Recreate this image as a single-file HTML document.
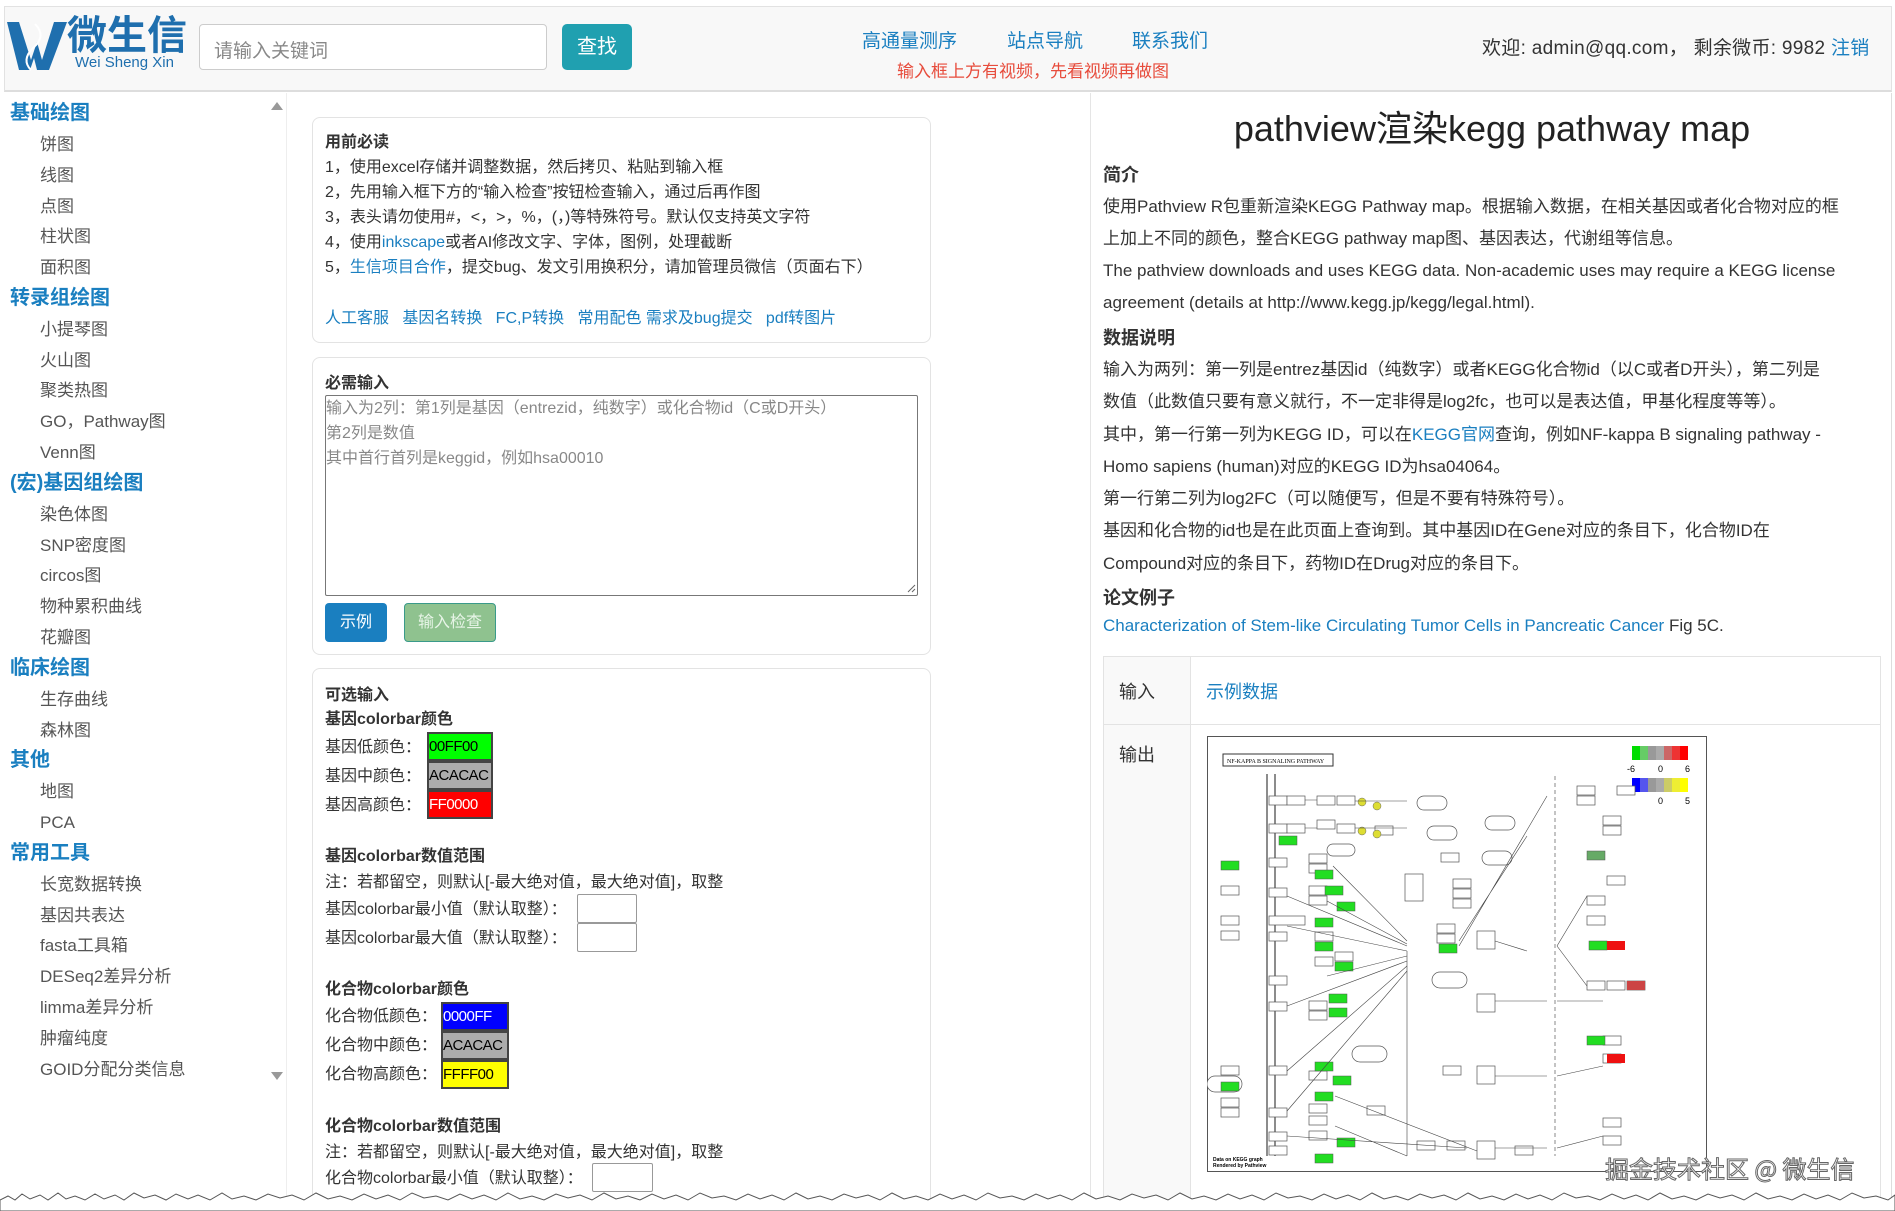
<!DOCTYPE html>
<html><head><meta charset="utf-8">
<style>
*{margin:0;padding:0;box-sizing:border-box}
html,body{width:1895px;height:1211px;overflow:hidden}
body{background:#fff;position:relative;font-family:"Liberation Sans","Noto Sans CJK SC",sans-serif;color:#333}
.a{position:absolute;white-space:nowrap}
.hdr{position:absolute;left:4px;top:6px;width:1888px;height:86px;background:#f8f8f8;border:1px solid #e2e2e2;border-bottom:2px solid #ddd}
.side .h{position:absolute;left:10px;font-size:20px;font-weight:bold;color:#1a7fc0;line-height:31px}
.side .i{position:absolute;left:40px;font-size:17px;color:#555;line-height:31px}
.card{position:absolute;left:312px;width:619px;border:1px solid #e3e3e3;border-radius:8px;background:#fff}
.m{font-size:16px;line-height:25px;color:#333}
.b{font-weight:bold}
.blue{color:#1a7fc0}
.cb{position:absolute;height:29px;border:2px solid #444;font-size:15px;line-height:25px;padding-left:0;overflow:hidden;letter-spacing:-0.5px}
.inp{position:absolute;height:29px;border:1px solid #999;border-radius:2px;background:#fff}
.r{font-size:17px;color:#333}
</style></head><body>
<div class="hdr"></div>
<svg class="a" style="left:5px;top:16px" width="64" height="56" viewBox="0 0 64 56">
<path d="M2 6 L14 6 L26 44 L32 26 L37 44 L49 6 L62 6 L44 54 L32 54 L29 42 L25 54 L14 54 Z" fill="#1f6fae"/>
<path d="M30 8 Q42 20 28 32 Q16 44 26 54" stroke="#fff" stroke-width="2" fill="none"/>
</svg>
<div class="a" style="left:67px;top:8px;font-size:40px;font-weight:bold;color:#1f6fae;line-height:48px;font-family:'Noto Sans CJK SC',sans-serif">微生信</div>
<div class="a" style="left:75px;top:54px;font-size:15px;color:#1f6fae">Wei Sheng Xin</div>
<div class="a" style="left:199px;top:24px;width:348px;height:46px;border:1px solid #ccc;border-radius:4px;background:#fff;font-size:19px;color:#888;padding:11px 14px">请输入关键词</div>
<div class="a" style="left:562px;top:24px;width:70px;height:46px;background:#20a0b0;border-radius:5px;color:#fff;font-size:20px;text-align:center;line-height:46px">查找</div>
<div class="a blue" style="left:862px;top:26px;font-size:19px">高通量测序</div>
<div class="a blue" style="left:1007px;top:26px;font-size:19px">站点导航</div>
<div class="a blue" style="left:1132px;top:26px;font-size:19px">联系我们</div>
<div class="a" style="left:897px;top:57px;font-size:17px;color:#e74c3c">输入框上方有视频，先看视频再做图</div>
<div class="a" style="left:1482px;top:33px;font-size:19px;color:#333;letter-spacing:0.3px">欢迎: admin@qq.com， 剩余微币: 9982 <span class="blue">注销</span></div>

<div class="side">
<div class="h" style="top:98px">基础绘图</div>
<div class="i" style="top:129px">饼图</div>
<div class="i" style="top:160px">线图</div>
<div class="i" style="top:191px">点图</div>
<div class="i" style="top:221px">柱状图</div>
<div class="i" style="top:252px">面积图</div>
<div class="h" style="top:283px">转录组绘图</div>
<div class="i" style="top:314px">小提琴图</div>
<div class="i" style="top:345px">火山图</div>
<div class="i" style="top:375px">聚类热图</div>
<div class="i" style="top:406px">GO，Pathway图</div>
<div class="i" style="top:437px">Venn图</div>
<div class="h" style="top:468px">(宏)基因组绘图</div>
<div class="i" style="top:499px">染色体图</div>
<div class="i" style="top:530px">SNP密度图</div>
<div class="i" style="top:560px">circos图</div>
<div class="i" style="top:591px">物种累积曲线</div>
<div class="i" style="top:622px">花瓣图</div>
<div class="h" style="top:653px">临床绘图</div>
<div class="i" style="top:684px">生存曲线</div>
<div class="i" style="top:715px">森林图</div>
<div class="h" style="top:745px">其他</div>
<div class="i" style="top:776px">地图</div>
<div class="i" style="top:807px">PCA</div>
<div class="h" style="top:838px">常用工具</div>
<div class="i" style="top:869px">长宽数据转换</div>
<div class="i" style="top:900px">基因共表达</div>
<div class="i" style="top:930px">fasta工具箱</div>
<div class="i" style="top:961px">DESeq2差异分析</div>
<div class="i" style="top:992px">limma差异分析</div>
<div class="i" style="top:1023px">肿瘤纯度</div>
<div class="i" style="top:1054px">GOID分配分类信息</div>
</div>
<div class="a" style="left:271px;top:102px;width:0;height:0;border-left:6px solid transparent;border-right:6px solid transparent;border-bottom:8px solid #999"></div>
<div class="a" style="left:271px;top:1072px;width:0;height:0;border-left:6px solid transparent;border-right:6px solid transparent;border-top:8px solid #999"></div>
<div class="a" style="left:286px;top:93px;width:1px;height:1110px;background:#eee"></div>

<div class="card" style="top:117px;height:226px"></div>
<div class="a m b" style="left:325px;top:130px">用前必读</div>
<div class="a m" style="left:325px;top:155px">1，使用excel存储并调整数据，然后拷贝、粘贴到输入框</div>
<div class="a m" style="left:325px;top:180px">2，先用输入框下方的“输入检查”按钮检查输入，通过后再作图</div>
<div class="a m" style="left:325px;top:205px">3，表头请勿使用#，&lt;，&gt;，%，(，)等特殊符号。默认仅支持英文字符</div>
<div class="a m" style="left:325px;top:230px">4，使用<span class="blue">inkscape</span>或者AI修改文字、字体，图例，处理截断</div>
<div class="a m" style="left:325px;top:255px">5，<span class="blue">生信项目合作</span>，提交bug、发文引用换积分，请加管理员微信（页面右下）</div>
<div class="a m" style="left:325px;top:306px;color:#1a7fc0">人工客服&nbsp;&nbsp; 基因名转换&nbsp;&nbsp; FC,P转换&nbsp;&nbsp; 常用配色 需求及bug提交&nbsp;&nbsp; pdf转图片</div>

<div class="card" style="top:357px;height:298px"></div>
<div class="a m b" style="left:325px;top:371px">必需输入</div>
<div class="a" style="left:325px;top:395px;width:593px;height:201px;border:1px solid #777;border-radius:2px"></div>
<div class="a m" style="left:326px;top:396px;color:#888">输入为2列：第1列是基因（entrezid，纯数字）或化合物id（C或D开头）<br>第2列是数值<br>其中首行首列是keggid，例如hsa00010</div>
<svg class="a" style="left:906px;top:583px" width="10" height="10"><path d="M2 9L9 2M6 9L9 6" stroke="#666"/></svg>
<div class="a" style="left:325px;top:603px;width:62px;height:39px;background:#1a7fc0;border-radius:4px;color:#fff;font-size:16px;text-align:center;line-height:39px">示例</div>
<div class="a" style="left:404px;top:603px;width:92px;height:39px;background:#8fc28f;border:1px solid #3a9a8a;border-radius:4px;color:#e8f5e8;font-size:16px;text-align:center;line-height:37px">输入检查</div>

<div class="card" style="top:668px;height:560px"></div>
<div class="a m b" style="left:325px;top:683px">可选输入</div>
<div class="a m b" style="left:325px;top:707px">基因colorbar颜色</div>
<div class="a m" style="left:325px;top:735px">基因低颜色：</div>
<div class="a m" style="left:325px;top:764px">基因中颜色：</div>
<div class="a m" style="left:325px;top:793px">基因高颜色：</div>
<div class="cb" style="left:427px;top:732px;width:66px;background:#00ff00;color:#000">00FF00</div>
<div class="cb" style="left:427px;top:761px;width:66px;background:#acacac;color:#000">ACACAC</div>
<div class="cb" style="left:427px;top:790px;width:66px;background:#ff0000;color:#fff">FF0000</div>
<div class="a m b" style="left:325px;top:844px">基因colorbar数值范围</div>
<div class="a m" style="left:325px;top:870px">注：若都留空，则默认[-最大绝对值，最大绝对值]，取整</div>
<div class="a m" style="left:325px;top:897px">基因colorbar最小值（默认取整）：</div>
<div class="a m" style="left:325px;top:926px">基因colorbar最大值（默认取整）：</div>
<div class="inp" style="left:577px;top:894px;width:60px"></div>
<div class="inp" style="left:577px;top:923px;width:60px"></div>
<div class="a m b" style="left:325px;top:977px">化合物colorbar颜色</div>
<div class="a m" style="left:325px;top:1004px">化合物低颜色：</div>
<div class="a m" style="left:325px;top:1033px">化合物中颜色：</div>
<div class="a m" style="left:325px;top:1062px">化合物高颜色：</div>
<div class="cb" style="left:441px;top:1002px;width:68px;background:#0000ff;color:#fff">0000FF</div>
<div class="cb" style="left:441px;top:1031px;width:68px;background:#acacac;color:#000">ACACAC</div>
<div class="cb" style="left:441px;top:1060px;width:68px;background:#ffff00;color:#000">FFFF00</div>
<div class="a m b" style="left:325px;top:1114px">化合物colorbar数值范围</div>
<div class="a m" style="left:325px;top:1140px">注：若都留空，则默认[-最大绝对值，最大绝对值]，取整</div>
<div class="a m" style="left:325px;top:1166px">化合物colorbar最小值（默认取整）：</div>
<div class="inp" style="left:592px;top:1163px;width:61px"></div>

<div class="a" style="left:1090px;top:93px;width:1px;height:1110px;background:#e5e5e5"></div>
<div class="a" style="left:1891px;top:93px;width:1px;height:1110px;background:#ddd"></div>
<div class="a" style="left:1103px;top:100px;width:778px;text-align:center;font-size:36px;color:#222">pathview渲染kegg pathway map</div>
<div class="a r b" style="left:1103px;top:161px;font-size:18px">简介</div>
<div class="a r" style="left:1103px;top:191px;line-height:32px">使用Pathview R包重新渲染KEGG Pathway map。根据输入数据，在相关基因或者化合物对应的框<br>上加上不同的颜色，整合KEGG pathway map图、基因表达，代谢组等信息。<br>The pathview downloads and uses KEGG data. Non-academic uses may require a KEGG license<br>agreement (details at http://www.kegg.jp/kegg/legal.html).</div>
<div class="a r b" style="left:1103px;top:324px;font-size:18px">数据说明</div>
<div class="a r" style="left:1103px;top:354px;line-height:32.3px">输入为两列：第一列是entrez基因id（纯数字）或者KEGG化合物id（以C或者D开头），第二列是<br>数值（此数值只要有意义就行，不一定非得是log2fc，也可以是表达值，甲基化程度等等）。<br>其中，第一行第一列为KEGG ID，可以在<span class="blue">KEGG官网</span>查询，例如NF-kappa B signaling pathway -<br>Homo sapiens (human)对应的KEGG ID为hsa04064。<br>第一行第二列为log2FC（可以随便写，但是不要有特殊符号）。<br>基因和化合物的id也是在此页面上查询到。其中基因ID在Gene对应的条目下，化合物ID在<br>Compound对应的条目下，药物ID在Drug对应的条目下。</div>
<div class="a r b" style="left:1103px;top:584px;font-size:18px">论文例子</div>
<div class="a r" style="left:1103px;top:616px"><span class="blue">Characterization of Stem-like Circulating Tumor Cells in Pancreatic Cancer</span> Fig 5C.</div>

<div class="a" style="left:1103px;top:656px;width:778px;height:550px;border:1px solid #e3e3e3"></div>
<div class="a" style="left:1104px;top:657px;width:87px;height:548px;background:#f9f9f9;border-right:1px solid #e3e3e3"></div>
<div class="a" style="left:1104px;top:724px;width:776px;height:1px;background:#e3e3e3"></div>
<div class="a" style="left:1119px;top:678px;font-size:18px;color:#333">输入</div>
<div class="a blue" style="left:1206px;top:678px;font-size:18px">示例数据</div>
<div class="a" style="left:1119px;top:741px;font-size:18px;color:#333">输出</div>

<svg class="a" style="left:1207px;top:736px" width="500" height="436" viewBox="0 0 500 436">
<rect x="0.5" y="0.5" width="499" height="435" fill="#fff" stroke="#555"/>
<rect x="16" y="18" width="110" height="12" fill="none" stroke="#333"/>
<text x="20" y="27" font-size="6" font-family="Liberation Serif">NF-KAPPA B SIGNALING PATHWAY</text>
<g><rect x="425" y="10" width="8" height="14" fill="#00dd00"/><rect x="433" y="10" width="8" height="14" fill="#66cc66"/><rect x="441" y="10" width="8" height="14" fill="#999"/><rect x="449" y="10" width="8" height="14" fill="#aaa"/><rect x="457" y="10" width="8" height="14" fill="#cc6666"/><rect x="465" y="10" width="8" height="14" fill="#ee3333"/><rect x="473" y="10" width="8" height="14" fill="#ff0000"/></g>
<g><rect x="425" y="42" width="8" height="14" fill="#0000ff"/><rect x="433" y="42" width="8" height="14" fill="#5555ee"/><rect x="441" y="42" width="8" height="14" fill="#999"/><rect x="449" y="42" width="8" height="14" fill="#aaa"/><rect x="457" y="42" width="8" height="14" fill="#cccc66"/><rect x="465" y="42" width="8" height="14" fill="#eeee33"/><rect x="473" y="42" width="8" height="14" fill="#ffff00"/></g>
<text x="420" y="36" font-size="9">-6</text><text x="451" y="36" font-size="9">0</text><text x="478" y="36" font-size="9">6</text>
<text x="451" y="68" font-size="9">0</text><text x="478" y="68" font-size="9">5</text>
<g stroke="#666" stroke-width="1.5"><line x1="60" y1="38" x2="60" y2="420"/><line x1="68" y1="38" x2="68" y2="420"/></g>
<line x1="348" y1="40" x2="348" y2="420" stroke="#888" stroke-dasharray="4,3"/>
<g fill="#fff" stroke="#555" stroke-width="0.7">
<rect x="62" y="60" width="18" height="9"/><rect x="80" y="60" width="18" height="9"/><rect x="110" y="60" width="18" height="9"/><rect x="130" y="60" width="18" height="9"/>
<rect x="62" y="88" width="18" height="9"/><rect x="80" y="88" width="18" height="9"/><rect x="110" y="84" width="18" height="9"/><rect x="130" y="88" width="18" height="9"/>
<rect x="62" y="122" width="18" height="9"/><rect x="102" y="118" width="18" height="9"/><rect x="102" y="128" width="18" height="9"/>
<rect x="62" y="152" width="18" height="9"/><rect x="102" y="150" width="18" height="9"/><rect x="102" y="160" width="18" height="9"/>
<rect x="14" y="150" width="18" height="9"/><rect x="14" y="180" width="18" height="9"/><rect x="14" y="195" width="18" height="9"/>
<rect x="62" y="180" width="36" height="9"/><rect x="62" y="196" width="18" height="9"/><rect x="108" y="196" width="18" height="9"/>
<rect x="108" y="221" width="18" height="9"/><rect x="128" y="216" width="18" height="9"/><rect x="62" y="240" width="18" height="9"/>
<rect x="62" y="266" width="18" height="9"/><rect x="102" y="265" width="18" height="9"/><rect x="102" y="275" width="18" height="9"/>
<rect x="14" y="330" width="18" height="9"/><rect x="62" y="330" width="18" height="9"/><rect x="102" y="335" width="18" height="9"/>
<rect x="14" y="362" width="18" height="9"/><rect x="14" y="372" width="18" height="9"/><rect x="62" y="372" width="18" height="9"/>
<rect x="102" y="368" width="18" height="9"/><rect x="102" y="380" width="18" height="9"/><rect x="102" y="395" width="18" height="9"/>
<rect x="62" y="396" width="18" height="9"/><rect x="62" y="410" width="18" height="9"/><rect x="160" y="370" width="18" height="9"/>
<rect x="230" y="188" width="18" height="9"/><rect x="230" y="198" width="18" height="9"/><rect x="246" y="143" width="18" height="9"/><rect x="246" y="153" width="18" height="9"/><rect x="246" y="163" width="18" height="9"/>
<rect x="198" y="138" width="18" height="27"/><rect x="234" y="117" width="18" height="9"/><rect x="270" y="195" width="18" height="18"/>
<rect x="270" y="258" width="18" height="18"/><rect x="270" y="330" width="18" height="18"/><rect x="270" y="405" width="18" height="18"/>
<rect x="210" y="405" width="18" height="9"/><rect x="240" y="405" width="18" height="9"/><rect x="236" y="330" width="18" height="9"/>
<rect x="308" y="410" width="18" height="9"/><rect x="168" y="90" width="18" height="9"/><rect x="396" y="80" width="18" height="9"/><rect x="396" y="90" width="18" height="9"/>
<rect x="370" y="50" width="18" height="9"/><rect x="370" y="60" width="18" height="9"/><rect x="410" y="50" width="18" height="9"/>
<rect x="400" y="245" width="18" height="9"/><rect x="420" y="245" width="18" height="9"/><rect x="380" y="245" width="18" height="9"/>
<rect x="380" y="160" width="18" height="9"/><rect x="380" y="180" width="18" height="9"/><rect x="400" y="140" width="18" height="9"/>
<rect x="396" y="300" width="18" height="9"/><rect x="396" y="318" width="18" height="9"/><rect x="396" y="382" width="18" height="9"/><rect x="396" y="400" width="18" height="9"/>
<rect x="210" y="60" width="30" height="14" rx="7"/><rect x="220" y="90" width="30" height="14" rx="7"/><rect x="120" y="108" width="28" height="12" rx="6"/>
<rect x="278" y="80" width="30" height="14" rx="7"/><rect x="275" y="115" width="30" height="14" rx="7"/><rect x="225" y="236" width="35" height="16" rx="8"/>
<rect x="145" y="310" width="35" height="16" rx="8"/><rect x="0" y="340" width="35" height="16" rx="8"/>
</g>
<g fill="#22dd22" stroke="#555" stroke-width="0.5">
<rect x="72" y="100" width="18" height="9"/><rect x="14" y="125" width="18" height="9"/><rect x="108" y="134" width="18" height="9"/><rect x="118" y="150" width="18" height="9"/>
<rect x="108" y="182" width="18" height="9"/><rect x="130" y="166" width="18" height="9"/><rect x="108" y="206" width="18" height="9"/><rect x="128" y="226" width="18" height="9"/>
<rect x="122" y="258" width="18" height="9"/><rect x="122" y="272" width="18" height="9"/><rect x="108" y="326" width="18" height="9"/><rect x="126" y="340" width="18" height="9"/>
<rect x="14" y="346" width="18" height="9"/><rect x="108" y="356" width="18" height="9"/><rect x="130" y="402" width="18" height="9"/><rect x="108" y="418" width="18" height="9"/>
<rect x="232" y="208" width="18" height="9"/><rect x="382" y="205" width="18" height="9"/><rect x="380" y="115" width="18" height="9" fill="#66aa66"/><rect x="380" y="300" width="18" height="9"/>
</g>
<g><rect x="400" y="205" width="18" height="9" fill="#ee1111"/><rect x="420" y="245" width="18" height="9" fill="#cc4444"/><rect x="400" y="318" width="18" height="9" fill="#ee1111"/></g>
<g fill="#dddd33" stroke="#666" stroke-width="0.5"><circle cx="155" cy="66" r="4"/><circle cx="170" cy="70" r="4"/><circle cx="155" cy="95" r="4"/><circle cx="170" cy="98" r="4"/></g>
<g stroke="#444" stroke-width="0.6" fill="none">
<path d="M80 160 L200 210 M80 190 L200 215 M120 240 L200 220 M80 270 L200 225 M80 335 L200 230 M80 375 L200 235 M126 130 L200 205 M120 165 L200 208"/>
<path d="M252 205 L320 100 M252 210 L340 60 M288 205 L320 215 M288 265 L340 265 M288 340 L340 340 M288 412 L340 412"/>
<path d="M350 210 L380 160 M350 210 L380 250 M350 265 L396 265 M350 412 L396 400 M350 340 L396 330"/>
<path d="M128 390 L200 420 M128 360 L270 415 M80 400 L260 412 M200 215 L200 420"/>
<path d="M148 65 L200 65 M148 92 L200 92 M98 64 L110 64 M98 92 L110 92"/>
</g>
<text x="6" y="425" font-size="5" font-weight="bold">Data on KEGG graph</text>
<text x="6" y="431" font-size="5" font-weight="bold">Rendered by Pathview</text>
</svg>
<div class="a" style="left:1605px;top:1150px;font-size:24px;color:#fff;-webkit-text-stroke:1px #666;font-family:'Noto Sans CJK SC',sans-serif">掘金技术社区 @ 微生信</div>

<svg class="a" style="left:0;top:1192px" width="1895" height="19" viewBox="0 0 1895 19">
<path d="M0 19 L0 8 L8 4 L15 8 L22 2 L30 7 L40 3 L48 8 L58 1 L66 7 L75 4 L85 8 L95 2 L104 7 L115 3 L124 8 L134 1 L144 6 L155 3 L166 8 L176 2 L188 7 L198 3 L210 8 L222 1 L232 7 L244 4 L256 8 L268 2 L280 6 L292 3 L304 8 L316 1 L328 7 L340 4 L352 8 L364 2 L376 7 L388 3 L400 8 L412 1 L424 6 L436 4 L448 8 L460 2 L472 7 L484 3 L496 8 L508 1 L520 7 L532 4 L544 8 L556 2 L568 6 L580 3 L592 8 L604 1 L616 7 L628 4 L640 8 L652 2 L664 7 L676 3 L688 8 L700 1 L712 6 L724 4 L736 8 L748 2 L760 7 L772 3 L784 8 L796 1 L808 7 L820 4 L832 8 L844 2 L856 6 L868 3 L880 8 L892 1 L904 7 L916 4 L928 8 L940 2 L952 7 L964 3 L976 8 L988 1 L1000 6 L1012 4 L1024 8 L1036 2 L1048 7 L1060 3 L1072 8 L1084 1 L1096 7 L1108 4 L1120 8 L1132 2 L1144 6 L1156 3 L1168 8 L1180 1 L1192 7 L1204 4 L1216 8 L1228 2 L1240 7 L1252 3 L1264 8 L1276 1 L1288 6 L1300 4 L1312 8 L1324 2 L1336 7 L1348 3 L1360 8 L1372 1 L1384 7 L1396 4 L1408 8 L1420 2 L1432 6 L1444 3 L1456 8 L1468 1 L1480 7 L1492 4 L1504 8 L1516 2 L1528 7 L1540 3 L1552 8 L1564 1 L1576 6 L1588 4 L1600 8 L1612 2 L1624 7 L1636 3 L1648 8 L1660 1 L1672 7 L1684 4 L1696 8 L1708 2 L1720 6 L1732 3 L1744 8 L1756 1 L1768 7 L1780 4 L1792 8 L1804 2 L1816 7 L1828 3 L1840 8 L1852 1 L1864 6 L1876 4 L1888 8 L1895 3 L1895 19 Z" fill="#fff" stroke="#555" stroke-width="1"/>
</svg>
</body></html>
